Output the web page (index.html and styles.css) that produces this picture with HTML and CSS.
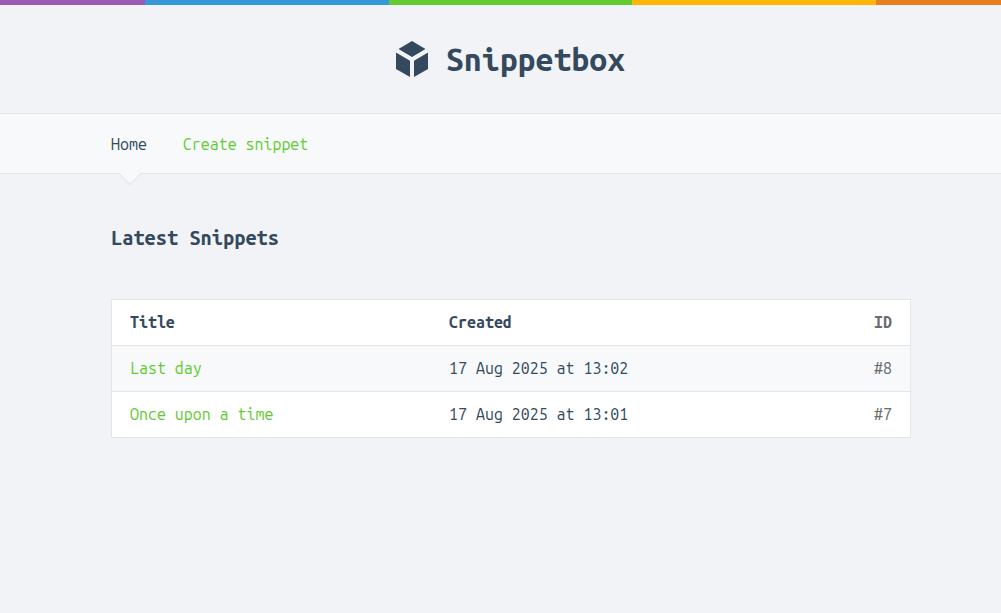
FILE: index.html
```html
<!DOCTYPE html>
<html lang="en">
<head>
<meta charset="utf-8">
<meta name="viewport" content="width=device-width, initial-scale=1">
<title>Home - Snippetbox</title>
<link rel="stylesheet" href="styles.css">
</head>
<body>
<div class="stripes" aria-hidden="true">
  <span class="purple"></span><span class="blue"></span><span class="green"></span><span class="yellow"></span><span class="orange"></span>
</div>
<header class="header">
  <h1><a class="brand" href="/">
    <svg class="logo" viewBox="0 0 32 36" aria-hidden="true"><path d="M16 0 29.5 8 16 16 2.500 8ZM0 11.500 14 19.800V36L0 28ZM32 11.500V28L18 36V19.800Z"/></svg>
    <span>Snippetbox</span>
  </a></h1>
</header>
<nav class="nav">
  <a class="live" href="/">Home</a>
  <a href="/snippet/create">Create snippet</a>
</nav>
<main class="main">
  <h2>Latest Snippets</h2>
  <table class="snippets">
    <thead>
      <tr><th scope="col">Title</th><th scope="col">Created</th><th scope="col">ID</th></tr>
    </thead>
    <tbody>
      <tr><td><a href="/snippet/view/8">Last day</a></td><td>17 Aug 2025 at 13:02</td><td>#8</td></tr>
      <tr><td><a href="/snippet/view/7">Once upon a time</a></td><td>17 Aug 2025 at 13:01</td><td>#7</td></tr>
    </tbody>
  </table>
</main>
</body>
</html>
```
FILE: styles.css
```css
* {
  box-sizing: border-box;
  margin: 0;
  padding: 0;
}

body {
  background: #f1f3f6;
  color: #34495e;
  font-family: "Ubuntu Mono", "Noto Sans Mono CJK SC", "DejaVu Sans Mono", monospace;
  font-size: 16px;
  line-height: 27px;
}

a {
  color: #62cb31;
  text-decoration: none;
}

.stripes {
  display: grid;
  grid-template-columns: 145fr 244fr 243fr 244fr 125fr;
  height: 5px;
}

.purple { background: #9b59b6; }
.blue { background: #3498db; }
.green { background: #62cb31; }
.yellow { background: #ffb606; }
.orange { background: #e67e22; }

.header {
  padding: 36px 90px 36px 110px;
}

.brand {
  display: flex;
  align-items: center;
  justify-content: center;
  gap: 18px;
  color: #34495e;
  font-size: 32px;
  line-height: 36px;
}

.logo {
  width: 32px;
  height: 36px;
  fill: currentColor;
}

.nav {
  display: flex;
  gap: 36px;
  padding: 17px 90px 15px 111px;
  background: #f7f9fa;
  border-top: 1px solid #e4e5e7;
  border-bottom: 1px solid #e4e5e7;
}

.nav .live {
  position: relative;
  color: #34495e;
}

/* Pointer under the current page's link */
.nav .live::after {
  content: "";
  position: absolute;
  bottom: -24px;
  left: 11px;
  width: 15px;
  height: 15px;
  background: linear-gradient(135deg, transparent 50%, #f7f9fa 50%);
  border-right: 1px solid #e4e5e7;
  border-bottom: 1px solid #e4e5e7;
  transform: rotate(45deg);
}

.main {
  padding: 50px 90px 54px 111px;
}

h2 {
  margin-bottom: 48px;
  font-size: 20px;
  line-height: 27px;
}

.snippets {
  width: 100%;
  table-layout: fixed;
  border-collapse: collapse;
  background: #fff;
  border: 1px solid #e4e5e7;
}

.snippets tr {
  border-bottom: 1px solid #e4e5e7;
}

.snippets tbody tr:nth-child(odd) {
  background: #f7f9fa;
}

th,
td {
  padding: 9px 18px;
  text-align: left;
}

th:first-child {
  width: 40%;
}

th:last-child,
td:last-child {
  text-align: right;
  color: #6a6c6f;
}
```
